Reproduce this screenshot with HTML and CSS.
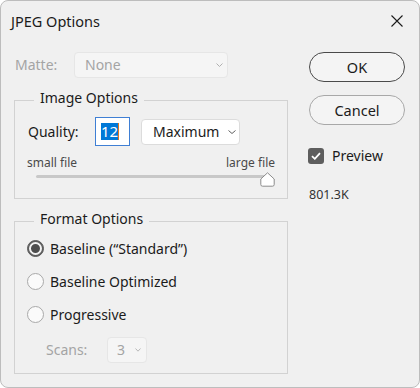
FILE: index.html
```html
<!DOCTYPE html>
<html lang="en">
<head>
    <meta charset="UTF-8">
    <meta name="viewport" content="width=device-width, initial-scale=1.0">
    <title>JPEG Options</title>
    <link rel="stylesheet" href="styles.css">
</head>
<body>
    <div class="window">
        <header class="titlebar">
            <span class="title">JPEG Options</span>
            <button class="close" aria-label="Close">
                <svg width="12" height="12" viewBox="0 0 12 12"><path d="M0.5 0.5 L11.5 11.5 M11.5 0.5 L0.5 11.5" stroke="#1b1b1b" stroke-width="1.1" fill="none"/></svg>
            </button>
        </header>
        <div class="content">
            <div class="main">
                <div class="matte-row">
                    <span class="label disabled">Matte:</span>
                    <div class="select disabled matte-select">
                        <span>None</span>
                        <svg class="chev" width="7" height="4" viewBox="0 0 7 4"><path d="M0.5 0.5 L3.5 3.5 L6.5 0.5" stroke="#b0b0b0" fill="none"/></svg>
                    </div>
                </div>

                <fieldset class="group image-opts">
                    <legend>Image Options</legend>
                    <div class="quality-row">
                        <span class="label">Quality:</span>
                        <div class="num-input"><span class="sel">12</span></div>
                        <div class="select quality-select">
                            <span>Maximum</span>
                            <svg class="chev" width="8" height="4" viewBox="0 0 8 4"><path d="M0.5 0.5 L4 3.5 L7.5 0.5" stroke="#606060" fill="none"/></svg>
                        </div>
                    </div>
                    <div class="slider-labels"><span>small file</span><span>large file</span></div>
                    <div class="slider">
                        <div class="track"></div>
                        <svg class="thumb" width="15" height="15" viewBox="0 0 15 15"><path d="M7.5 0.8 L14.2 7 V12.5 Q14.2 14.2 12.5 14.2 H2.5 Q0.8 14.2 0.8 12.5 V7 Z" fill="#fff" stroke="#8c8c8c"/></svg>
                    </div>
                </fieldset>

                <fieldset class="group format-opts">
                    <legend>Format Options</legend>
                    <label class="radio checked"><span class="dot"></span>Baseline (“Standard”)</label>
                    <label class="radio"><span class="dot"></span>Baseline Optimized</label>
                    <label class="radio"><span class="dot"></span>Progressive</label>
                    <div class="scans-row">
                        <span class="label disabled">Scans:</span>
                        <div class="select disabled scans-select">
                            <span>3</span>
                            <svg class="chev" width="6" height="4" viewBox="0 0 6 4"><path d="M0.5 0.5 L3 3.2 L5.5 0.5" stroke="#b8b8b8" fill="none"/></svg>
                        </div>
                    </div>
                </fieldset>
            </div>

            <aside class="side">
                <button class="btn default">OK</button>
                <button class="btn">Cancel</button>
                <label class="check">
                    <span class="box">
                        <svg width="10" height="8" viewBox="0 0 10 8"><path d="M1 4.2 L3.8 6.8 L9 1.2" stroke="#fff" stroke-width="1.8" fill="none"/></svg>
                    </span>
                    Preview
                </label>
                <div class="file-size">801.3K</div>
            </aside>
        </div>
    </div>
</body>
</html>
```

FILE: styles.css
```css
* {
    margin: 0;
    padding: 0;
    box-sizing: border-box;
}
html, body {
    background: #fff;
}
body {
    font-family: "Noto Sans", sans-serif;
    font-size: 14px;
    color: #1b1b1b;
}
.window {
    width: 420px;
    height: 388px;
    border: 1px solid #bdbdbd;
    border-radius: 8px;
    background: #f0f0f0;
    overflow: hidden;
}
.titlebar {
    height: 39px;
    display: flex;
    align-items: center;
    justify-content: space-between;
    padding: 0 16px 0 10px;
}
.title {
    font-size: 14.5px;
    line-height: 20px;
}
.close {
    border: none;
    background: none;
    display: flex;
}
.content {
    display: flex;
    gap: 21px;
    padding: 12px 14px 0 13px;
}
.main {
    width: 274px;
}
.label {
    line-height: 20px;
}
.disabled {
    color: #a4a4a4;
}
.select {
    display: flex;
    align-items: center;
    justify-content: space-between;
    height: 26px;
    border: 1px solid #dcdcdc;
    border-radius: 4px;
    background: #fff;
    line-height: 20px;
}
.select.disabled {
    background: #f5f5f5;
    border-color: #e6e6e6;
}
.matte-row {
    display: flex;
    align-items: center;
    height: 26px;
}
.matte-row .label {
    width: 60px;
    padding-left: 1px;
}
.matte-select {
    width: 154px;
    padding: 0 4px 0 10px;
}
.group {
    border: 1px solid #d2d2d2;
    margin-top: 12px;
}
.group legend {
    line-height: 15px;
    padding: 0 6px 5px;
    margin-left: 7px;
}
.image-opts {
    padding: 7px 12px 12px 12px;
}
.quality-row {
    display: flex;
    align-items: center;
    height: 29px;
}
.quality-row .label {
    width: 68px;
    padding-left: 1px;
}
.num-input {
    width: 35px;
    height: 29px;
    border: 1px solid #3f7fd4;
    background: #fff;
    display: flex;
    align-items: center;
    padding-left: 5px;
}
.sel {
    background: #0078d7;
    color: #fff;
    line-height: 17px;
    font-size: 15px;
    border-right: 1px solid #e0771c;
}
.quality-select {
    width: 99px;
    margin-left: 11px;
    padding: 0 3px 0 11px;
}
.slider-labels {
    display: flex;
    justify-content: space-between;
    height: 16px;
    margin-top: 9px;
    font-size: 12px;
    line-height: 16px;
    color: #4a4a4a;
}
.slider {
    position: relative;
    display: flex;
    align-items: flex-start;
    height: 16px;
    margin-top: -1px;
}
.track {
    flex: 1;
    height: 3px;
    margin: 5px 7px 0 9px;
    background: #c8c8c8;
    border-radius: 2px;
}
.thumb {
    position: absolute;
    right: 0;
    top: 2px;
}
.format-opts {
    padding: 1px 12px 10px 12px;
}
.radio {
    display: flex;
    align-items: center;
    gap: 6px;
    height: 33px;
}
.dot {
    width: 17px;
    height: 17px;
    border-radius: 50%;
    border: 1px solid #a9a9a9;
    background: #fafafa;
    display: flex;
    align-items: center;
    justify-content: center;
}
.radio.checked .dot {
    background: #5e5e5e;
    border-color: #5e5e5e;
}
.radio.checked .dot::after {
    content: "";
    width: 9px;
    height: 9px;
    border-radius: 50%;
    border: 2px solid #f2f2f2;
    background: #4e4e4e;
}
.scans-row {
    display: flex;
    align-items: center;
    height: 26px;
    margin-top: 6px;
    padding-left: 19px;
}
.scans-row .label {
    width: 61px;
}
.scans-select {
    width: 40px;
    padding: 0 5px 0 9px;
}
.side {
    width: 96px;
    display: flex;
    flex-direction: column;
}
.btn {
    height: 30px;
    border: 1px solid #a8a8a8;
    border-radius: 15px;
    background: #f4f4f4;
    font-family: inherit;
    font-size: 14.5px;
    color: #1b1b1b;
}
.btn.default {
    border-color: #4a4a4a;
}
.btn + .btn {
    margin-top: 13px;
}
.check {
    display: flex;
    align-items: center;
    gap: 8px;
    margin: 23px 0 0 -1px;
    line-height: 16px;
}
.box {
    width: 16px;
    height: 16px;
    border-radius: 3px;
    background: #5e5e5e;
    display: flex;
    align-items: center;
    justify-content: center;
}
.file-size {
    margin-top: 23px;
    font-size: 12.5px;
    line-height: 16px;
    color: #333;
}
```
